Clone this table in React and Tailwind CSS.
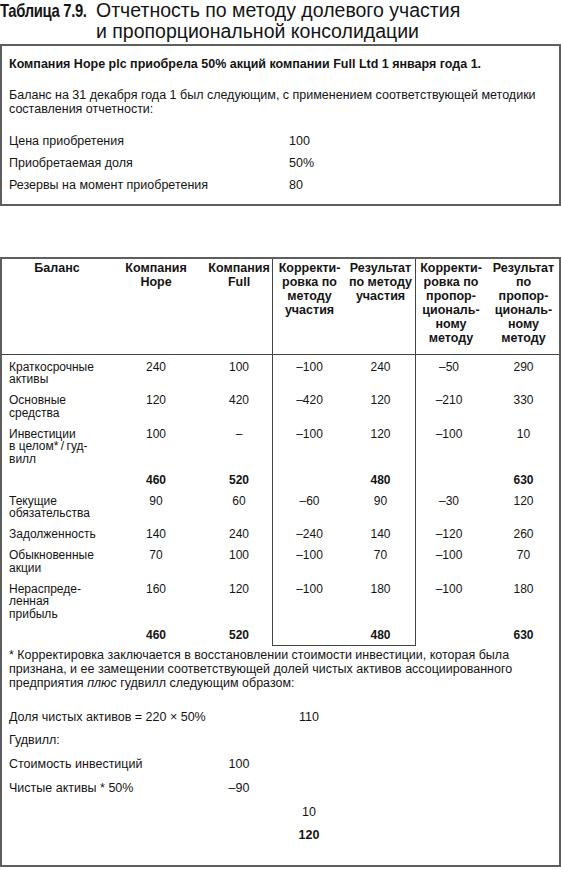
import React from "react";

const F = "font-['Liberation_Sans',Arial,Helvetica,sans-serif]";

function Row({ label, vals, bold, pt = "pt-[0px]", pb = "pb-[8.5px]", closeMid }) {
  const cell = `${pt} ${pb}`;
  const num = `${cell} text-center ${bold ? "font-bold" : ""}`;
  return (
    <div className="grid grid-cols-[110px_88px_72px_144px_68px_1fr] text-[12px] leading-[12.5px]">
      <div className={`${cell} pl-[7px]`}>{label}</div>
      <div className={num}>{vals[0]}</div>
      <div className={`${num} pl-[6px]`}>{vals[1]}</div>
      <div className={`grid grid-cols-[73px_69px] border-x border-[#444] ${closeMid ? "border-b" : ""}`}>
        <div className={num}>{vals[2]}</div>
        <div className={num}>{vals[3]}</div>
      </div>
      <div className={`${num} pr-[2px]`}>{vals[4]}</div>
      <div className={`${num} pl-[4px]`}>{vals[5]}</div>
    </div>
  );
}

export default function App() {
  const hc = "pt-[2px] pb-[9px] text-center";
  const br = "grid grid-cols-[200px_60px_80px]";
  return (
    <div className={`${F} w-[561px] bg-white text-[#141414]`}>
      {/* Title */}
      <div className="h-[44px] flex text-[19.5px] leading-[20.5px]">
        <div className="w-[96px] shrink-0 whitespace-nowrap">
          <span className="inline-block font-bold text-[18.5px] tracking-[-0.4px] origin-left scale-x-[0.8]">
            Таблица 7.9.
          </span>
        </div>
        <div className="whitespace-nowrap">
          Отчетность по методу долевого участия
          <br />
          и пропорциональной консолидации
        </div>
      </div>

      {/* Box 1 */}
      <div className="border-2 border-[#5e5e5e] pl-[7px] pt-[10px] pb-[12px] text-[12.5px]">
        <div className="font-bold leading-[16px]">
          Компания Hope plc приобрела 50% акций компании Full Ltd 1 января года 1.
        </div>
        <div className="mt-[16px] leading-[14px]">
          Баланс на 31 декабря года 1 был следующим, с применением соответствующей методики
          <br />
          составления отчетности:
        </div>
        <div className="mt-[18px] flex flex-col gap-[8px] leading-[14px]">
          <div className="grid grid-cols-[280px_1fr]">
            <span>Цена приобретения</span>
            <span>100</span>
          </div>
          <div className="grid grid-cols-[280px_1fr]">
            <span>Приобретаемая доля</span>
            <span>50%</span>
          </div>
          <div className="grid grid-cols-[280px_1fr]">
            <span>Резервы на момент приобретения</span>
            <span>80</span>
          </div>
        </div>
      </div>

      {/* Table */}
      <div className="mt-[51px] border-2 border-[#5e5e5e] pb-[23px]">
        <div className="grid grid-cols-[110px_88px_72px_144px_68px_1fr] border-b border-[#444] text-[12.5px] leading-[14px] font-bold">
          <div className={hc}>Баланс</div>
          <div className={hc}>
            Компания
            <br />
            Hope
          </div>
          <div className={`${hc} pl-[6px]`}>
            Компания
            <br />
            Full
          </div>
          <div className="grid grid-cols-[73px_69px] border-x border-[#444]">
            <div className={hc}>
              Корректи-
              <br />
              ровка по
              <br />
              методу
              <br />
              участия
            </div>
            <div className={hc}>
              Результат
              <br />
              по методу
              <br />
              участия
            </div>
          </div>
          <div className={`${hc} pl-[2px]`}>
            Корректи-
            <br />
            ровка по
            <br />
            пропор-
            <br />
            циональ-
            <br />
            ному
            <br />
            методу
          </div>
          <div className={`${hc} pl-[4px]`}>
            Результат
            <br />
            по
            <br />
            пропор-
            <br />
            циональ-
            <br />
            ному
            <br />
            методу
          </div>
        </div>

        <Row
          pt="pt-[5.5px]"
          label={<>Краткосрочные<br />активы</>}
          vals={["240", "100", "–100", "240", "–50", "290"]}
        />
        <Row
          label={<>Основные<br />средства</>}
          vals={["120", "420", "–420", "120", "–210", "330"]}
        />
        <Row
          label={<>Инвестиции<br />в целом*{"\u2009"}/{"\u2009"}гуд-<br />вилл</>}
          vals={["100", "–", "–100", "120", "–100", "10"]}
        />
        <Row label="" bold vals={["460", "520", "", "480", "", "630"]} />
        <Row
          label={<>Текущие<br />обязательства</>}
          vals={["90", "60", "–60", "90", "–30", "120"]}
        />
        <Row label="Задолженность" vals={["140", "240", "–240", "140", "–120", "260"]} />
        <Row
          label={<>Обыкновенные<br />акции</>}
          vals={["70", "100", "–100", "70", "–100", "70"]}
        />
        <Row
          label={<>Нераспреде-<br />ленная<br />прибыль</>}
          vals={["160", "120", "–100", "180", "–100", "180"]}
        />
        <Row
          label=""
          bold
          pb="pb-[3.5px]"
          closeMid
          vals={["460", "520", "", "480", "", "630"]}
        />

        {/* Footnote */}
        <div className="pl-[7px] pt-[2px] text-[12.5px] leading-[14px]">
          <div>
            * Корректировка заключается в восстановлении стоимости инвестиции, которая была
            <br />
            признана, и ее замещении соответствующей долей чистых активов ассоциированного
            <br />
            предприятия <i>плюс</i> гудвилл следующим образом:
          </div>
          <div className="mt-[20px] flex flex-col gap-[9.8px]">
            <div className={br}>
              <span>Доля чистых активов = 220 × 50%</span>
              <span></span>
              <span className="text-center">110</span>
            </div>
            <div className={br}>
              <span>Гудвилл:</span>
              <span></span>
              <span></span>
            </div>
            <div className={br}>
              <span>Стоимость инвестиций</span>
              <span className="text-center">100</span>
              <span></span>
            </div>
            <div className={br}>
              <span>Чистые активы * 50%</span>
              <span className="text-center">–90</span>
              <span></span>
            </div>
            <div className={br}>
              <span></span>
              <span></span>
              <span className="text-center">10</span>
            </div>
            <div className={br}>
              <span></span>
              <span></span>
              <span className="text-center font-bold">120</span>
            </div>
          </div>
        </div>
      </div>
    </div>
  );
}
